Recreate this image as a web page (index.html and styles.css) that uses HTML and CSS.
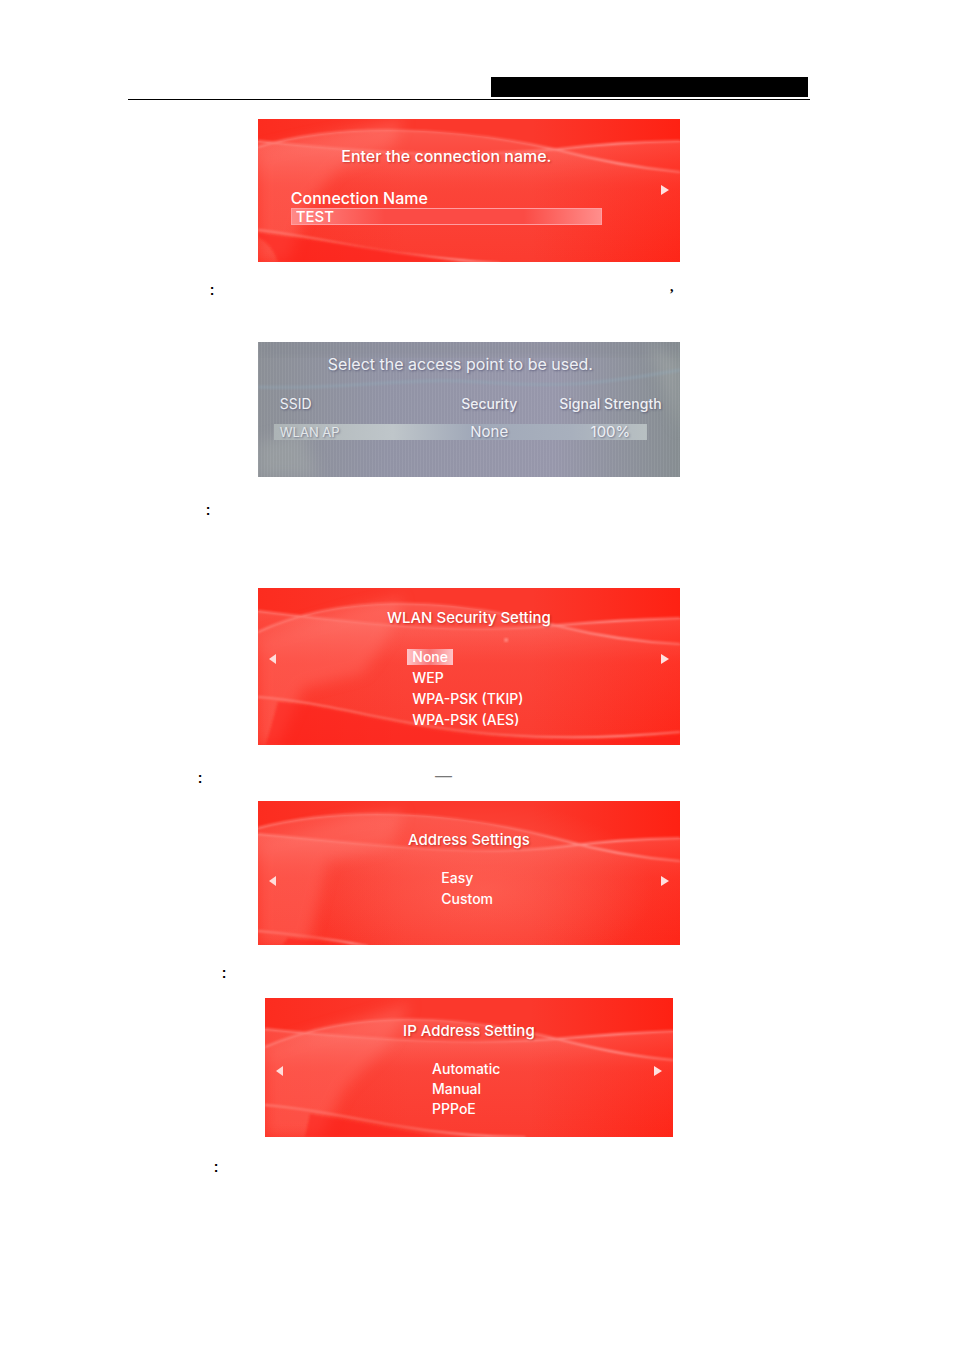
FILE: index.html
```html
<!DOCTYPE html>
<html lang="en">
<head>
<meta charset="utf-8">
<title>Connection setup</title>
<link rel="stylesheet" href="styles.css">
</head>
<body>
<svg class="defs" aria-hidden="true">
  <defs>
    <linearGradient id="base" x1="0" y1="0" x2="1" y2="0">
      <stop offset="0" stop-color="#fc2c1f"/><stop offset=".35" stop-color="#fb382c"/>
      <stop offset=".65" stop-color="#fb382c"/><stop offset="1" stop-color="#fe2113"/>
    </linearGradient>
    <linearGradient id="veil" x1="0" y1="0" x2="0" y2="1">
      <stop offset="0" stop-color="#ff9a94" stop-opacity=".3"/><stop offset=".4" stop-color="#ff7068" stop-opacity=".12"/>
      <stop offset="1" stop-color="#ff7068" stop-opacity=".03"/>
    </linearGradient>
    <linearGradient id="glow" x1="0" y1="0" x2="1" y2="0">
      <stop offset="0" stop-color="#ff8880" stop-opacity=".75"/><stop offset=".5" stop-color="#ff8078" stop-opacity=".5"/>
      <stop offset=".85" stop-color="#ffa09c" stop-opacity=".85"/><stop offset="1" stop-color="#ff7f78" stop-opacity=".7"/>
    </linearGradient>
    <radialGradient id="bloom">
      <stop offset="0" stop-color="#ff6a5c" stop-opacity=".6"/><stop offset="1" stop-color="#ff6a5c" stop-opacity="0"/>
    </radialGradient>
    <linearGradient id="grey" x1="0" y1="0" x2="1" y2="0">
      <stop offset="0" stop-color="#8b8f96"/><stop offset=".3" stop-color="#9193a5"/>
      <stop offset=".7" stop-color="#9797ab"/><stop offset="1" stop-color="#868d91"/>
    </linearGradient>
    <filter id="soft" x="-20%" y="-20%" width="140%" height="140%"><feGaussianBlur stdDeviation="1"/></filter>
    <filter id="haze" x="-30%" y="-30%" width="160%" height="160%"><feGaussianBlur stdDeviation="7"/></filter>
    <pattern id="lines" width="3" height="3" patternUnits="userSpaceOnUse"><path d="M0 0V3" stroke="#fff" stroke-opacity=".1"/></pattern>
  </defs>
</svg>

<main class="page">
  <header class="page-header"><div class="header-block"></div></header>

  <section class="screen screen-name">
    <svg class="backdrop" viewBox="0 0 422 143" preserveAspectRatio="none" aria-hidden="true">
      <path fill="url(#base)" d="M0 0H422V143H0Z"/>
      <path fill="#ff6a60" opacity=".5" filter="url(#haze)" d="M0 32L90 12 145 0 135 28 80 50 50 85 30 143H0Z"/>
      <path fill="url(#veil)" d="M0 28C80 4 190 6 300 31Q360 47 422 53V143H0Z"/>
      <path fill="url(#veil)" d="M0 22C120 35 210 38 300 30Q360 23 422 22V143H0Z"/>
      <g fill="none" stroke="url(#glow)" stroke-width="2" filter="url(#soft)">
        <path d="M0 28C80 4 190 6 300 31Q360 47 422 53"/><path d="M0 22C120 35 210 38 300 30Q360 23 422 22"/><path d="M0 111C70 119 130 138 242 144"/>
      </g>
      <path fill="#fd1d12" opacity=".5" filter="url(#soft)" d="M0 114Q90 125 200 143H20Q14 125 0 118Z"/>
    </svg>
    <div class="screen-body">
      <h2 class="screen-title">Enter the connection name.</h2>
      <label class="field-label" for="connection-name">Connection Name</label>
      <input class="field" id="connection-name" type="text" value="TEST">
    </div>
    <button class="arrow" type="button" aria-label="Next"><svg viewBox="0 0 10 14"><path fill="#fff" fill-opacity=".85" d="M1 2L9 7 1 12Z"/></svg></button>
  </section>

  <div class="note note-search"><p class="text">:</p><p class="comma">,</p></div>

  <section class="screen screen-ap">
    <svg class="backdrop" viewBox="0 0 422 135" preserveAspectRatio="none" aria-hidden="true">
      <path fill="url(#grey)" d="M0 0H422V135H0Z"/>
      <path fill="#81858e" opacity=".6" filter="url(#haze)" d="M0 0H422V12H0Z"/>
      <path fill="#a2a8a7" opacity=".5" filter="url(#haze)" d="M0 100L45 90 60 135H0ZM350 0H390L422 90V20L390 0Z"/>
      <path fill="none" stroke="#8fa7b7" stroke-width="3" opacity=".4" filter="url(#soft)" d="M0 45C90 48 140 35 220 40S330 44 422 28"/>
      <path fill="url(#lines)" d="M0 0H422V135H0Z"/>
    </svg>
    <div class="screen-body">
      <h2 class="screen-title">Select the access point to be used.</h2>
      <table class="ap-table">
        <thead><tr><th scope="col">SSID</th><th scope="col">Security</th><th scope="col">Signal Strength</th></tr></thead>
        <tbody><tr><td>WLAN AP</td><td>None</td><td>100%</td></tr></tbody>
      </table>
    </div>
  </section>

  <div class="note note-security"><p class="text">:</p></div>

  <section class="screen screen-security">
    <svg class="backdrop" viewBox="0 0 422 157" preserveAspectRatio="none" aria-hidden="true">
      <path fill="url(#base)" d="M0 0H422V157H0Z"/>
      <path fill="#ff6a60" opacity=".5" filter="url(#haze)" d="M0 50L100 20 145 10 130 50 105 85 45 100 20 157H0Z"/>
      <path fill="url(#veil)" d="M0 44C80 6 190 8 300 38Q360 53 422 56V157H0Z"/>
      <path fill="url(#veil)" d="M0 23C120 38 210 46 300 37Q360 32 422 30V157H0Z"/>
      <g fill="none" stroke="url(#glow)" stroke-width="2" filter="url(#soft)">
        <path d="M0 44C80 6 190 8 300 38Q360 53 422 56"/><path d="M0 23C120 38 210 46 300 37Q360 32 422 30"/><path d="M0 109C110 117 190 165 422 144"/>
      </g>
      <path fill="#fd1d12" opacity=".5" filter="url(#soft)" d="M20 114C120 122 190 166 422 147V157H8Z"/>
      <circle cx="248" cy="52" r="2" fill="#ff8c84" filter="url(#soft)"/>
    </svg>
    <button class="arrow" type="button" aria-label="Previous"><svg viewBox="0 0 10 14"><path fill="#fff" fill-opacity=".8" d="M8 2L1 7 8 12Z"/></svg></button>
    <div class="screen-body">
      <h2 class="screen-title">WLAN Security Setting</h2>
      <ul class="options">
        <li><button class="option selected" type="button">None</button></li>
        <li><button class="option" type="button">WEP</button></li>
        <li><button class="option" type="button">WPA-PSK (TKIP)</button></li>
        <li><button class="option" type="button">WPA-PSK (AES)</button></li>
      </ul>
    </div>
    <button class="arrow" type="button" aria-label="Next"><svg viewBox="0 0 10 14"><path fill="#fff" fill-opacity=".85" d="M1 2L9 7 1 12Z"/></svg></button>
  </section>

  <div class="note note-address"><p class="text">:</p><p class="dash">—</p></div>

  <section class="screen screen-address">
    <svg class="backdrop" viewBox="0 0 422 144" preserveAspectRatio="none" aria-hidden="true">
      <path fill="url(#base)" d="M0 0H422V144H0Z"/>
      <path fill="#ff6a60" opacity=".5" filter="url(#haze)" d="M0 40L100 15 145 10 135 45 70 60 50 144H0Z"/>
      <ellipse cx="225" cy="90" rx="170" ry="90" fill="url(#bloom)"/>
      <path fill="url(#veil)" d="M0 27C80 6 190 8 300 38Q360 55 422 60V144H0Z"/>
      <path fill="url(#veil)" d="M0 33C120 44 210 56 300 46Q360 38 422 37V144H0Z"/>
      <g fill="none" stroke="url(#glow)" stroke-width="2" filter="url(#soft)">
        <path d="M0 27C80 6 190 8 300 38Q360 55 422 60"/><path d="M0 33C120 44 210 56 300 46Q360 38 422 37"/><path d="M0 130Q50 134 110 145"/>
      </g>
      <path fill="#fd1d12" opacity=".5" filter="url(#soft)" d="M30 137L90 144H25Z"/>
    </svg>
    <button class="arrow" type="button" aria-label="Previous"><svg viewBox="0 0 10 14"><path fill="#fff" fill-opacity=".8" d="M8 2L1 7 8 12Z"/></svg></button>
    <div class="screen-body">
      <h2 class="screen-title">Address Settings</h2>
      <ul class="options">
        <li><button class="option" type="button">Easy</button></li>
        <li><button class="option" type="button">Custom</button></li>
      </ul>
    </div>
    <button class="arrow" type="button" aria-label="Next"><svg viewBox="0 0 10 14"><path fill="#fff" fill-opacity=".85" d="M1 2L9 7 1 12Z"/></svg></button>
  </section>

  <div class="note note-ip"><p class="text">:</p></div>

  <section class="screen screen-ip">
    <svg class="backdrop" viewBox="0 0 408 139" preserveAspectRatio="none" aria-hidden="true">
      <path fill="url(#base)" d="M0 0H408V139H0Z"/>
      <path fill="#ff6a60" opacity=".5" filter="url(#haze)" d="M0 50L100 20 145 5 125 45 80 90 55 139H0Z"/>
      <path fill="url(#veil)" d="M0 49C80 14 180 12 300 43Q360 58 408 62V139H0Z"/>
      <path fill="url(#veil)" d="M0 31C110 42 210 48 300 40Q360 35 408 33V139H0Z"/>
      <g fill="none" stroke="url(#glow)" stroke-width="2" filter="url(#soft)">
        <path d="M0 49C80 14 180 12 300 43Q360 58 408 62"/><path d="M0 31C110 42 210 48 300 40Q360 35 408 33"/><path d="M0 107C80 113 140 138 260 139"/>
      </g>
      <path fill="#fd1d12" opacity=".5" filter="url(#soft)" d="M45 116Q110 127 170 139H40Z"/>
    </svg>
    <button class="arrow" type="button" aria-label="Previous"><svg viewBox="0 0 10 14"><path fill="#fff" fill-opacity=".8" d="M8 2L1 7 8 12Z"/></svg></button>
    <div class="screen-body">
      <h2 class="screen-title">IP Address Setting</h2>
      <ul class="options">
        <li><button class="option" type="button">Automatic</button></li>
        <li><button class="option" type="button">Manual</button></li>
        <li><button class="option" type="button">PPPoE</button></li>
      </ul>
    </div>
    <button class="arrow" type="button" aria-label="Next"><svg viewBox="0 0 10 14"><path fill="#fff" fill-opacity=".85" d="M1 2L9 7 1 12Z"/></svg></button>
  </section>

  <div class="note note-final"><p class="text">:</p></div>
</main>
</body>
</html>
```

FILE: styles.css
```css
* { box-sizing: border-box; }
body { margin: 0; background: #fff; color: #000; font-family: "Liberation Sans", Arial, sans-serif; }
h2, p, ul { margin: 0; padding: 0; }
.defs { position: absolute; width: 0; height: 0; }

.page { display: flex; flex-direction: column; padding: 77px 15.1% 60px 13.4%; }
.page-header { display: flex; justify-content: flex-end; padding: 0 2px 2px 0; border-bottom: 1px solid #000; margin-bottom: 19px; }
.header-block { width: 46.6%; height: 20px; background: #000; }

.screen {
  position: relative;
  display: grid;
  grid-template-columns: 30px 1fr 30px;
  align-items: start;
  align-self: center;
  width: 61.9%;
  color: #fff;
  font-family: Inter, "Liberation Sans", sans-serif;
  font-size: 15px;
  overflow: hidden;
}
.backdrop { position: absolute; inset: 0; width: 100%; height: 100%; }
.screen-body { position: relative; grid-column: 2; }
.screen-title { font-size: 15px; font-weight: 500; line-height: 20px; text-align: center; white-space: nowrap; text-shadow: 1px 1px 2px rgba(130, 0, 0, .4); }

.arrow { position: relative; justify-self: center; margin: 64px 0 0; padding: 0; width: 10px; height: 14px; border: 0; background: none; }
.arrow svg { display: block; width: 10px; height: 14px; }

.options { display: flex; flex-direction: column; list-style: none; }
.options li { display: flex; height: 21px; align-items: center; }
.option { padding: 0 5px; border: 0; background: none; color: #fff; font: 500 14px/16px Inter, "Liberation Sans", sans-serif; }
.option.selected { background: linear-gradient(90deg, #ffc4c8, #f87878 50%, #ffc4c8); }

.screen-name { min-height: 143px; }
.screen-name .screen-body { padding: 27px 48px 0 3px; }
.screen-name .screen-title { font-size: 16px; }
.screen-name .arrow { grid-column: 3; }
.field-label { display: block; margin-top: 22px; font-size: 16px; line-height: 20px; font-weight: 500; }
.field { display: block; width: 100%; height: 17px; padding: 0 4px; border: 1px solid #ff9da0; border-radius: 0; background: linear-gradient(90deg, #ff8a88, #fb4b45 30%, #fb4b45 75%, #ff8e8c); color: #fff; font: 500 15px/15px Inter, "Liberation Sans", sans-serif; }

.screen-ap { min-height: 135px; color: #eef0f4; grid-template-columns: 16px 1fr 9px; }
.screen-ap .screen-title { padding: 0 24px 0 0; margin: 12px 0 20px; font-weight: 400; font-size: 16px; text-shadow: 1px 1px 2px rgba(50, 50, 90, .5); }
.ap-table { width: 100%; table-layout: fixed; border-collapse: collapse; font-size: 14px; text-shadow: 1px 1px 2px rgba(50, 50, 90, .5); }
.ap-table th, .ap-table td { padding: 0; text-align: center; font-weight: 400; white-space: nowrap; }
.ap-table th { height: 30px; padding-bottom: 11px; line-height: 19px; font-weight: 500; }
.ap-table th:first-child, .ap-table td:first-child { width: 39%; padding-left: 6px; text-align: left; font-weight: 400; }
.ap-table td { line-height: 16px; font-size: 15px; }
.ap-table td:first-child { font-size: 13px; color: #e4e8ea; }
.ap-table tbody tr { background: linear-gradient(90deg, #adb4b6, #bfc6ca 30%, #a0a8b8 50%, #a8b0bd 75%, #b8c0c2 94%, transparent 94%); }

.screen-security { min-height: 157px; }
.screen-security .screen-body { padding-top: 20px; }
.screen-security .options { margin: 18px 0 0 33%; }

.screen-address { min-height: 144px; }
.screen-address .screen-body { padding-top: 29px; }
.screen-address .options { margin: 17px 0 0 41%; }
.screen-address .arrow { margin-top: 73px; }

.screen-ip { min-height: 139px; width: 59.9%; }
.screen-ip .screen-body { padding-top: 23px; }
.screen-ip .options { margin: 18px 0 0 38%; }
.screen-ip .options li { height: 20px; }
.screen-ip .arrow { margin-top: 66px; }

.note { display: flex; align-items: flex-start; }
.text { font-size: 14px; font-weight: 700; line-height: 22px; }
.comma { font: 700 14px/16px "Liberation Serif", serif; }
.dash { margin-left: 38%; font-size: 17px; line-height: 18px; color: #777; }
.note-search { justify-content: space-between; min-height: 63px; margin-top: 17px; padding: 0 20% 0 12%; }
.note-security { min-height: 89px; margin-top: 22px; padding-left: 78px; }
.note-address { min-height: 34px; margin-top: 22px; padding-left: 70px; }
.note-ip { min-height: 36px; margin-top: 17px; padding-left: 94px; }
.note-final { margin-top: 19px; padding-left: 86px; }
```
